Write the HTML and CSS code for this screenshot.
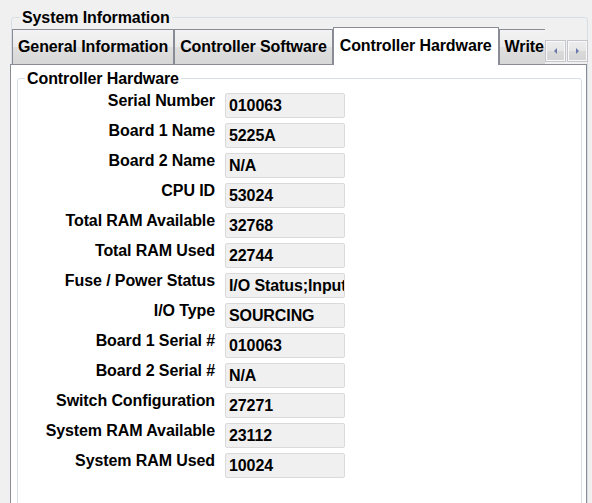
FILE: index.html
```
<!DOCTYPE html>
<html>
<head>
<meta charset="utf-8">
<link rel="stylesheet" href="styles.css">
</head>
<body>
<fieldset class="group outer">
  <legend class="group-title">System Information</legend>
  <div class="tab-header">
    <div class="tab-strip">
      <div class="tab">General Information</div>
      <div class="tab">Controller Software</div>
      <div class="tab tab-active">Controller Hardware</div>
      <div class="tab tab-last">Write Configuration</div>
    </div>
    <div class="scroller">
      <div class="scroll-btn"><span class="arrow arrow-left"></span></div>
      <div class="scroll-btn"><span class="arrow arrow-right"></span></div>
    </div>
  </div>
  <div class="tab-panel">
    <fieldset class="group inner">
      <legend class="group-title inner-title">Controller Hardware</legend>
      <div class="rows">
        <div class="label">Serial Number</div><div class="value">010063</div>
        <div class="label">Board 1 Name</div><div class="value">5225A</div>
        <div class="label">Board 2 Name</div><div class="value">N/A</div>
        <div class="label">CPU ID</div><div class="value">53024</div>
        <div class="label">Total RAM Available</div><div class="value">32768</div>
        <div class="label">Total RAM Used</div><div class="value">22744</div>
        <div class="label">Fuse / Power Status</div><div class="value">I/O Status;Input Power OK</div>
        <div class="label">I/O Type</div><div class="value">SOURCING</div>
        <div class="label">Board 1 Serial #</div><div class="value">010063</div>
        <div class="label">Board 2 Serial #</div><div class="value">N/A</div>
        <div class="label">Switch Configuration</div><div class="value">27271</div>
        <div class="label">System RAM Available</div><div class="value">23112</div>
        <div class="label">System RAM Used</div><div class="value">10024</div>
      </div>
    </fieldset>
  </div>
</fieldset>
</body>
</html>
```
FILE: styles.css
```
html, body {
  margin: 0;
  padding: 0;
  height: 503px;
  overflow: hidden;
  background: #f0f0f0;
  font-family: "Liberation Sans", Arial, sans-serif;
  font-weight: bold;
  font-size: 16px;
  letter-spacing: -0.1px;
  color: #000;
}

.group {
  border: 1px solid #d5dfe5;
  border-radius: 3px;
  padding: 0;
  min-width: 0;
}

.group-title {
  line-height: 17px;
  padding: 0 2px;
  margin-left: 8px;
}

.outer {
  margin: 9px 4px 0 11px;
  height: 520px;
}

.tab-header {
  display: flex;
  align-items: flex-end;
  height: 37px;
  margin: 1px -1px 0 -2px;
  position: relative;
  z-index: 2;
}

.tab-strip {
  flex: 1;
  min-width: 0;
  display: flex;
  align-items: flex-end;
  height: 37px;
  padding-left: 2px;
  overflow-x: clip;
  overflow-y: visible;
}

.tab {
  flex-shrink: 0;
  height: 34px;
  line-height: 34px;
  padding: 0 5px;
  border: 1px solid #898c95;
  border-bottom: none;
  background: linear-gradient(#f3f3f3, #ebebeb 50%, #dfdfdf 50%, #d7d7d7);
  white-space: nowrap;
}

.tab-active {
  height: 35px;
  line-height: 35px;
  padding: 0 6px 2px 6px;
  margin-bottom: -1px;
  background: #fff;
}

.tab-last {
  padding-left: 5px;
}

.scroller {
  display: flex;
  gap: 1px;
  margin-bottom: 2px;
  flex-shrink: 0;
}

.scroll-btn {
  width: 19px;
  height: 20px;
  border: 1px solid #c4c6cb;
  box-shadow: inset 0 0 0 1px #f8f8f8;
  background: linear-gradient(#ededed, #e6e6e6 50%, #dadada 50%, #d4d4d4);
  display: flex;
  align-items: center;
  justify-content: center;
}

.arrow {
  width: 0;
  height: 0;
  border-top: 3px solid transparent;
  border-bottom: 3px solid transparent;
}

.arrow-left {
  border-right: 3px solid #6a78ac;
}

.arrow-right {
  border-left: 3px solid #6a78ac;
}

.tab-panel {
  margin: 0 0 0 -2px;
  height: 470px;
  background: #fff;
  border: 1px solid #898c95;
  position: relative;
  z-index: 1;
}

.inner {
  margin: 5px 4px 0 6px;
  height: 440px;
}

.inner-title {
  margin-left: 7px;
}

.rows {
  display: grid;
  grid-template-columns: 197px 120px;
  grid-auto-rows: 25px;
  column-gap: 10px;
  row-gap: 5px;
  padding-top: 6px;
}

.label {
  text-align: right;
  line-height: 15px;
  white-space: nowrap;
}

.value {
  box-sizing: border-box;
  height: 25px;
  line-height: 23px;
  padding-left: 3px;
  background: #f0f0f0;
  border: 1px solid #dadada;
  border-radius: 2px;
  white-space: nowrap;
  overflow: hidden;
}
```
